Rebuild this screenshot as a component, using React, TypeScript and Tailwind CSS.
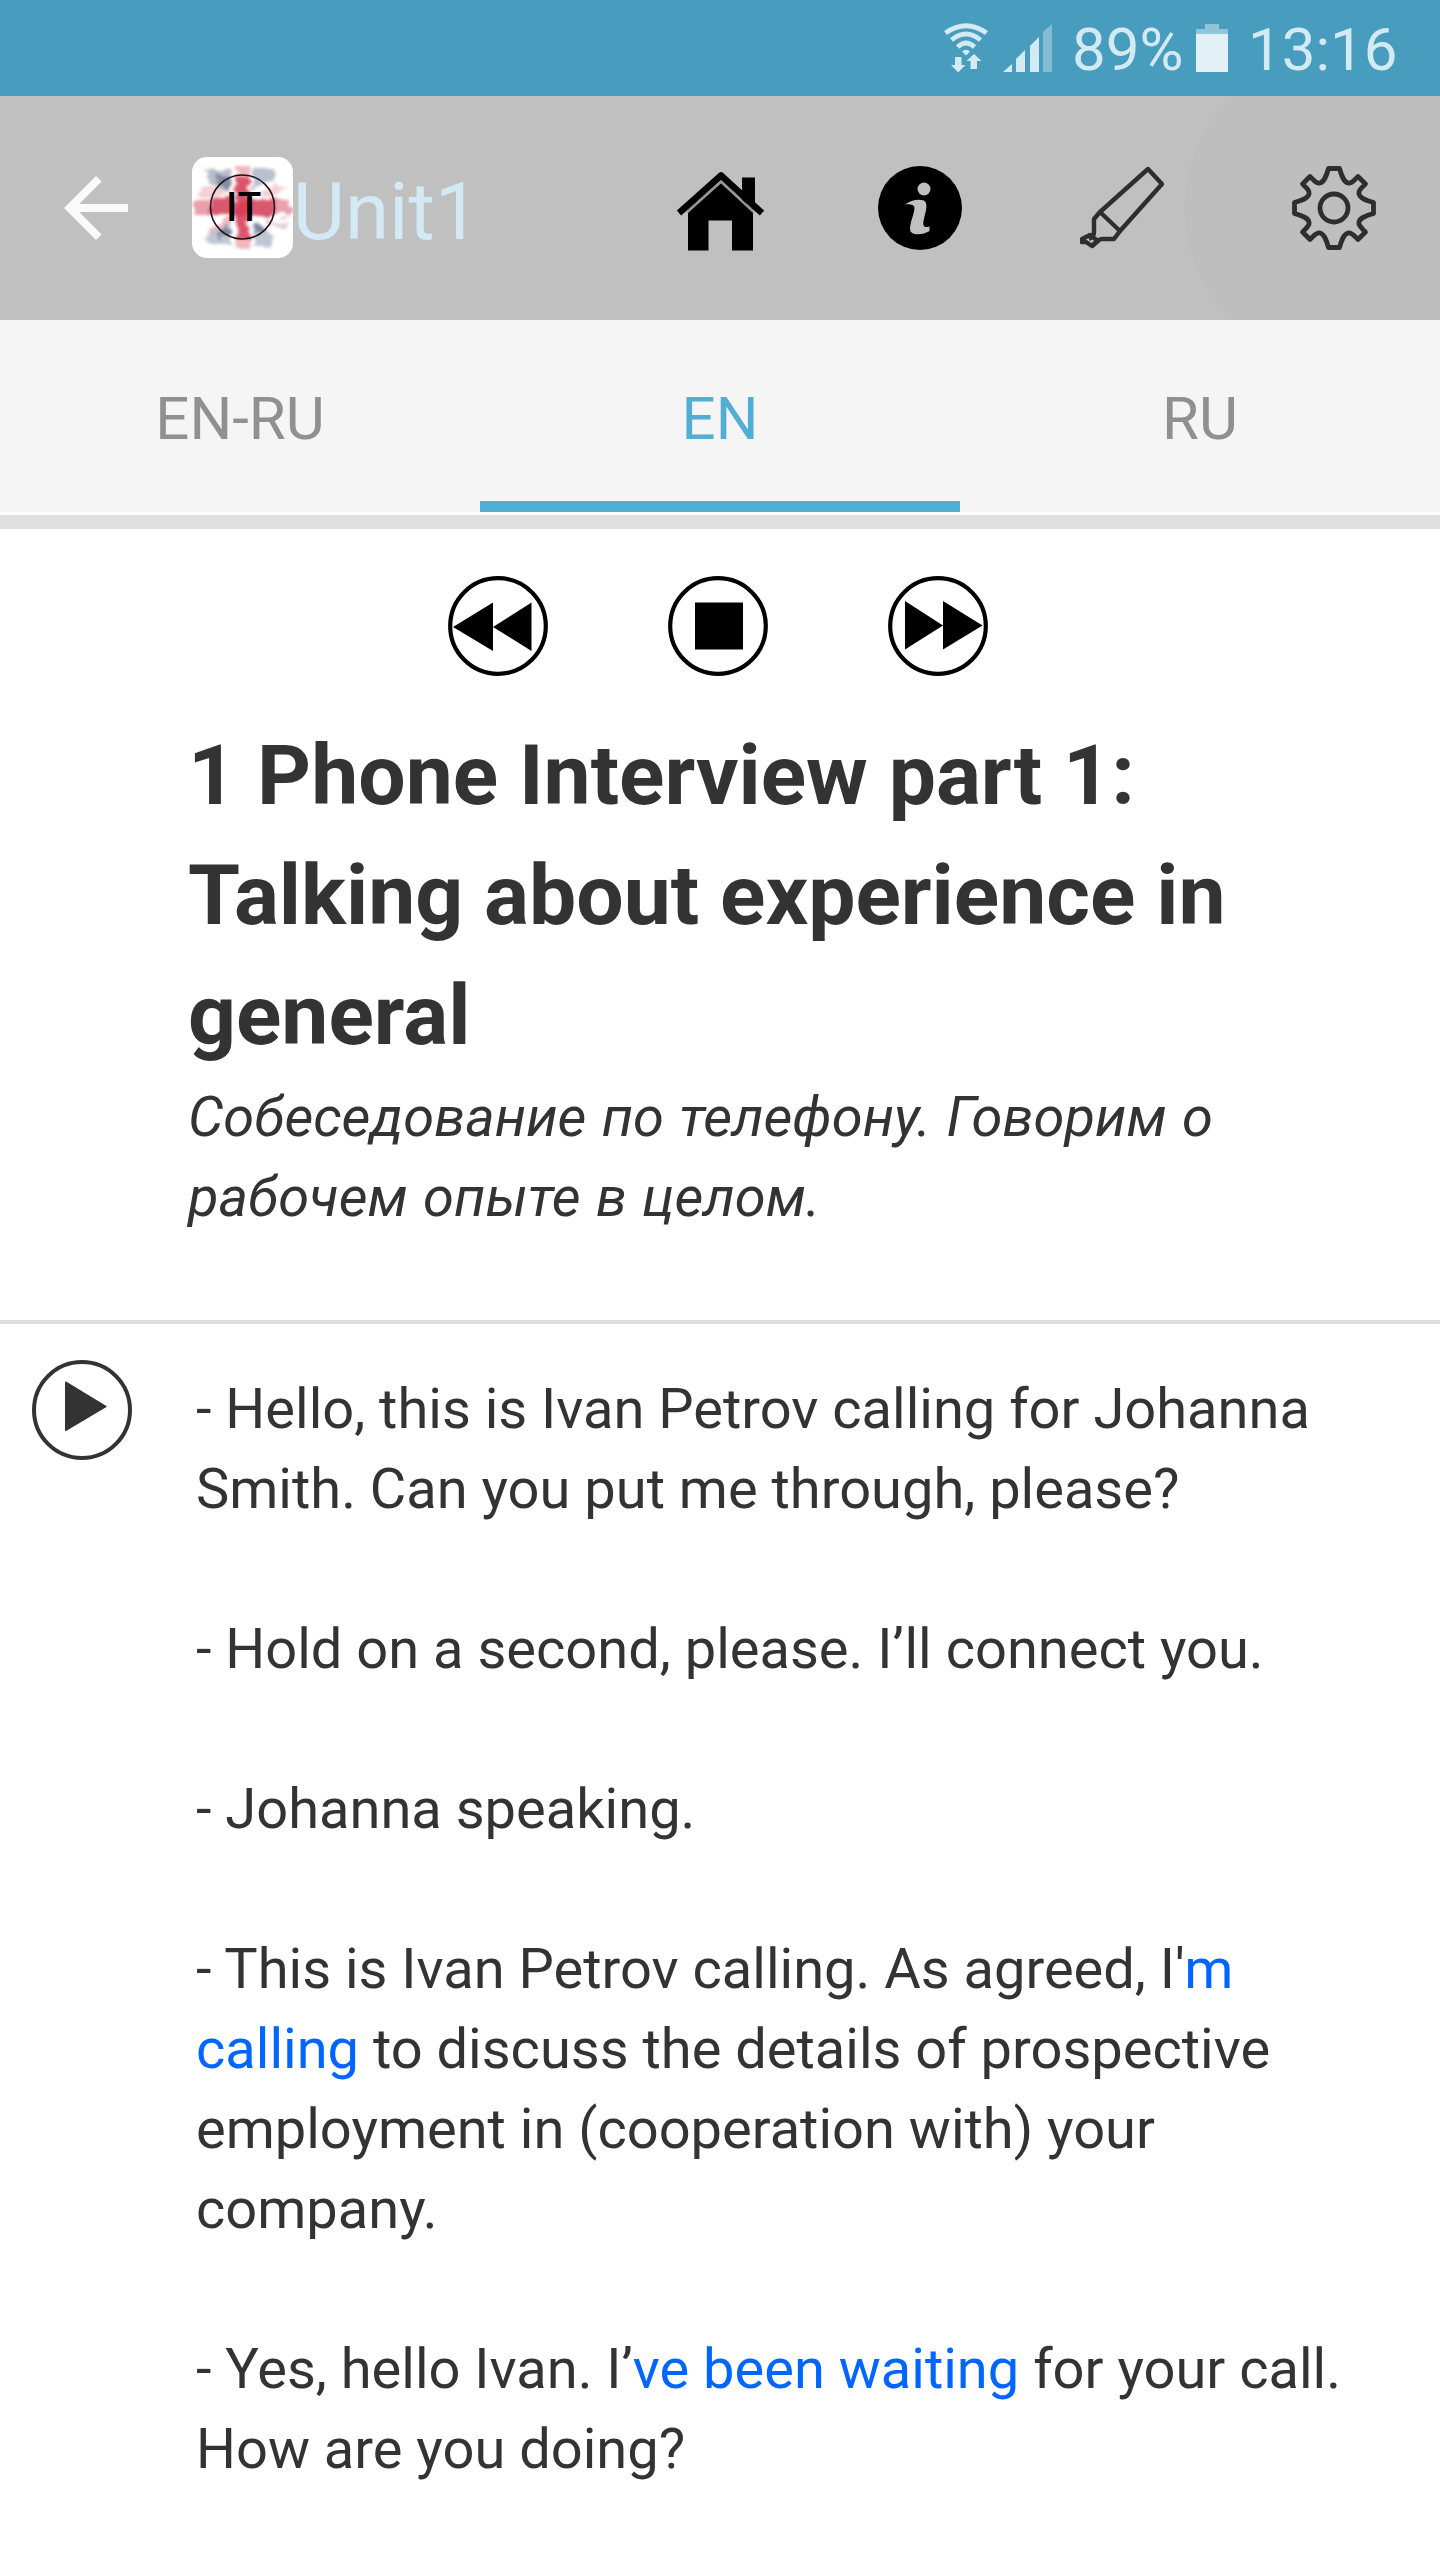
import React from "react";

interface IconProps {
  className?: string;
}

interface Part {
  text: string;
  link?: boolean;
}

const tabs = [
  { name: "EN-RU", active: false },
  { name: "EN", active: true },
  { name: "RU", active: false },
];

const dialog: Part[][][] = [
  [
    [{ text: "- Hello, this is Ivan Petrov calling for Johanna" }],
    [{ text: "Smith. Can you put me through, please?" }],
  ],
  [[{ text: "- Hold on a second, please. I’ll connect you." }]],
  [[{ text: "- Johanna speaking." }]],
  [
    [
      { text: "- This is Ivan Petrov calling. As agreed, I'" },
      { text: "m", link: true },
    ],
    [
      { text: "calling", link: true },
      { text: " to discuss the details of prospective" },
    ],
    [{ text: "employment in (cooperation with) your" }],
    [{ text: "company." }],
  ],
  [
    [
      { text: "- Yes, hello Ivan. I’" },
      { text: "ve been waiting", link: true },
      { text: " for your call." },
    ],
    [{ text: "How are you doing?" }],
  ],
];

function WifiIcon({ className }: IconProps) {
  return (
    <svg className={className} viewBox="0 0 44 50" fill="none">
      <g stroke="#d3eaf3" strokeWidth="4.800">
        <path d="M1.500 10Q22 -4.500 42.500 10" />
        <path d="M7.500 17Q22 5 36.500 17" />
        <path d="M13.500 24Q22 16 30.500 24" />
      </g>
      <path d="M18 28.500Q22 25.200 26 28.500L22 32.500Z" fill="#d3eaf3" />
      <path
        d="M11 34h6.500v8h4l-7.300 7.500-7.200-7.500h4zM26.500 46h6.500v-8h4.500L30 31l-7.500 7h4z"
        fill="#d3eaf3"
      />
    </svg>
  );
}

function SignalIcon({ className }: IconProps) {
  return (
    <svg className={className} viewBox="0 0 50 48" fill="#d3eaf3">
      <path d="M0 48L9 40V48Z" />
      <path d="M13 48V35L22 26V48Z" />
      <path d="M27 48V22L36 13V48Z" />
      <path d="M40 48V8L49 0V48Z" fill="#84bdd3" />
    </svg>
  );
}

function BatteryIcon({ className }: IconProps) {
  return (
    <svg className={className} viewBox="0 0 32 48">
      <path d="M0 5H9V0H23V5H32V10H0Z" fill="#91c4d8" />
      <path d="M0 10H32V48H0Z" fill="#e2eff5" />
    </svg>
  );
}

function BackIcon({ className }: IconProps) {
  return (
    <svg className={className} viewBox="0 0 64 64" fill="#fafafa">
      <path d="M64 28H15.300L37.700 5.600L32 0L0 32L32 64L37.700 58.400L15.300 36H64Z" />
    </svg>
  );
}

function Logo({ className }: IconProps) {
  return (
    <svg className={className} viewBox="0 0 101 101">
      <defs>
        <filter id="paint" x="-20%" y="-20%" width="140%" height="140%">
          <feTurbulence
            type="fractalNoise"
            baseFrequency="0.05 0.14"
            numOctaves="3"
            seed="4"
            result="noise"
          />
          <feDisplacementMap
            in="SourceGraphic"
            in2="noise"
            scale="12"
            xChannelSelector="R"
            yChannelSelector="G"
          />
          <feGaussianBlur stdDeviation="1.7" />
        </filter>
        <clipPath id="logoClip">
          <rect width="101" height="101" rx="15" />
        </clipPath>
      </defs>
      <rect width="101" height="101" rx="15" fill="#fff" />
      <g clipPath="url(#logoClip)">
        <g filter="url(#paint)">
          <path d="M15 13L39 11V36L27 32L13 21Z" fill="#68718f" opacity=".45" />
          <path d="M22 15L38 17V34L29 27Z" fill="#4b5577" opacity=".5" />
          <path d="M61 12L82 12L84 23L61 33Z" fill="#8b94ad" opacity=".6" />
          <path d="M39 65V88L18 88L14 80Z" fill="#7780a0" opacity=".45" />
          <path d="M38 66V78L26 79Z" fill="#4b5577" opacity=".6" />
          <path d="M61 65L82 80L78 90L61 86Z" fill="#7780a0" opacity=".45" />
          <path d="M62 66L75 76L64 79Z" fill="#4b5577" opacity=".6" />
          <path d="M6 34L25 30L36 39H6Z" fill="#e88a98" opacity=".4" />
          <path d="M66 36L86 26L95 31L78 40Z" fill="#e88a98" opacity=".4" />
          <path d="M16 73L34 62H42L20 78Z" fill="#de7787" opacity=".55" />
          <path d="M70 62L98 67L94 71L78 69Z" fill="#b98fa6" opacity=".4" />
          <path d="M2 43H99V59H2Z" fill="#dd6e80" opacity=".65" />
          <path d="M19 42H84V59H19Z" fill="#d5405a" opacity=".75" />
          <path d="M44 9H58V91H44Z" fill="#e46e80" opacity=".5" />
          <path d="M45 20H57V82H45Z" fill="#d5364f" opacity=".75" />
        </g>
      </g>
      <circle
        cx="50.500"
        cy="50"
        r="32"
        fill="none"
        stroke="#1a1115"
        strokeWidth="1.500"
      />
      <text
        x="33.500"
        y="63.700"
        fontSize="39"
        fontWeight="600"
        fontFamily="'Open Sans', sans-serif"
        textLength="35.500"
        lengthAdjust="spacingAndGlyphs"
        fill="#000"
      >
        IT
      </text>
    </svg>
  );
}

function HomeIcon({ className }: IconProps) {
  return (
    <svg className={className} viewBox="0 0 88 84" overflow="visible">
      <path d="M66 34V11.500H79V44Z" fill="#000" />
      <path
        d="M3 47L45 9.500L86 47"
        fill="none"
        stroke="#000"
        strokeWidth="6.500"
        strokeLinejoin="round"
      />
      <path d="M12 44L45 15L77 44V84.500H56V54.500H32.500V84.500H12Z" fill="#000" />
      <path
        d="M11 46.500L45 16L78 46.500"
        fill="none"
        stroke="#9a9a9a"
        strokeWidth="2.200"
      />
    </svg>
  );
}

function InfoIcon({ className }: IconProps) {
  return (
    <svg className={className} viewBox="0 0 84 84">
      <circle cx="42" cy="42" r="42" fill="#000" />
      <g fill="#c0c0c0">
        <circle cx="46" cy="23" r="6.500" />
        <path d="M27 38.500C33 34 40 32.500 46 34.500C51 38 47 47 45.500 55C44.500 61 47 62 51.500 60.500V65C46 68.500 36 70 32.500 65.500C30.500 59 36 50 36.500 42C36.500 38.500 32 38 27 38.500Z" />
      </g>
    </svg>
  );
}

function MarkerIcon({ className }: IconProps) {
  return (
    <svg
      className={className}
      viewBox="0 0 84 84"
      fill="none"
      stroke="#2e2e2e"
      strokeWidth="4.400"
      strokeLinejoin="round"
    >
      <path d="M20 46L68 3L82 18L40 65Z" />
      <path d="M20 46L14 53V66C14 70 11 72 9 73M40 65L34 73H22C18 73 15 77 12 80" />
      <path d="M10 69L18 75L12 80L6 76L2 76V73Z" />
    </svg>
  );
}

function GearIcon({ className }: IconProps) {
  return (
    <svg
      className={className}
      viewBox="-42 -42 84 84"
      fill="none"
      stroke="#2e2e2e"
      strokeWidth="4.800"
      strokeLinejoin="round"
    >
      <circle r="14" />
      <path d="M-5.500 -39.500H5.500C8 -31 10 -26 14 -25C18 -24 20 -28 24 -31.500L31.500 -24C28 -20 24 -18 25 -14C26 -10 31 -8 39.500 -5.500V5.500C31 8 26 10 25 14C24 18 28 20 31.500 24L24 31.500C20 28 18 24 14 25C10 26 8 31 5.500 39.500H-5.500C-8 31 -10 26 -14 25C-18 24 -20 28 -24 31.500L-31.500 24C-28 20 -24 18 -25 14C-26 10 -31 8 -39.500 5.500V-5.500C-31 -8 -26 -10 -25 -14C-24 -18 -28 -20 -31.500 -24L-24 -31.500C-20 -28 -18 -24 -14 -25C-10 -26 -8 -31 -5.500 -39.500Z" />
    </svg>
  );
}

function MediaButton({ d }: { d: string }) {
  return (
    <button className="size-[100px]">
      <svg className="size-full" viewBox="0 0 100 100">
        <circle
          cx="50"
          cy="50"
          r="47.800"
          fill="none"
          stroke="#000"
          strokeWidth="4.200"
        />
        <path d={d} fill="#000" />
      </svg>
    </button>
  );
}

function StatusBar() {
  return (
    <div className="flex h-24 items-start justify-end bg-[#489cbe] pr-[43px] text-[60px] leading-[60px] text-[#d3eaf3]">
      <WifiIcon className="mt-[23px] mr-[15px] h-[50px] w-11" />
      <SignalIcon className="mt-6 mr-[19px] h-12 w-[50px]" />
      <span className="mt-5 w-[114px] whitespace-nowrap">89%</span>
      <BatteryIcon className="mt-6 mr-5 ml-[10px] h-12 w-8" />
      <span className="mt-5 w-[149px] whitespace-nowrap">13:16</span>
    </div>
  );
}

function Header() {
  return (
    <header className="relative flex h-56 items-center overflow-hidden bg-[#c0c0c0] pl-16">
      <div className="absolute -top-[43px] left-[1184px] size-[310px] rounded-full bg-[#bebebe]" />
      <BackIcon className="size-16" />
      <Logo className="mb-px ml-16 size-[101px]" />
      <h1 className="mt-2 w-[383px] text-[80px] leading-[80px] text-[#d3e9f3]">
        Unit1
      </h1>
      <HomeIcon className="h-[84px] w-[88px]" />
      <InfoIcon className="ml-[114px] size-[84px]" />
      <MarkerIcon className="ml-[118px] size-[84px]" />
      <GearIcon className="relative ml-[128px] size-[84px]" />
    </header>
  );
}

function Tabs() {
  return (
    <nav className="grid h-48 grid-cols-3 bg-[#f5f5f5] text-[60px] leading-[60px]">
      {tabs.map((tab) => (
        <button
          key={tab.name}
          className={
            tab.active
              ? "border-b-[11px] border-[#52aed2] pt-4 text-[#52aed2]"
              : "border-b-[11px] border-transparent pt-4 text-[#909090]"
          }
        >
          {tab.name}
        </button>
      ))}
    </nav>
  );
}

export default function App() {
  return (
    <div className="h-[2560px] w-[1440px] overflow-hidden bg-white font-['Roboto',sans-serif] text-[#333]">
      <StatusBar />
      <Header />
      <Tabs />
      <div className="mt-[3px] h-[14px] bg-[#e0e0de]" />

      <section className="h-[795px] border-b-4 border-[#dcdedd] pt-[47px]">
        <div className="flex gap-[120px] pl-[448px]">
          <MediaButton d="M5 51L45 26.500V75ZM45 51L83.500 26.500V75Z" />
          <MediaButton d="M27 26.500H75V73.500H27Z" />
          <MediaButton d="M17 25L55 49.500L17 73.500ZM55 25L94.500 49.500L55 73.500Z" />
        </div>
        <h2 className="mt-10 pl-[188px] text-[84px] leading-[120px] font-bold">
          1 Phone Interview part 1:
          <br />
          Talking about experience in
          <br />
          general
        </h2>
        <p className="mt-px pl-[188px] text-[56px] leading-[80px] [word-spacing:1.6px] italic">
          Собеседование по телефону. Говорим о
          <br />
          рабочем опыте в целом.
        </p>
      </section>

      <section className="flex pl-8">
        <button className="mt-9 size-[100px] shrink-0">
          <svg className="size-full" viewBox="0 0 100 100">
            <circle
              cx="50"
              cy="50"
              r="48"
              fill="none"
              stroke="#333"
              strokeWidth="4"
            />
            <path
              d="M34 22.500L73.500 46.500L34 70Z"
              fill="#333"
              stroke="#333"
              strokeWidth="2"
              strokeLinejoin="round"
            />
          </svg>
        </button>
        <div className="mt-[45px] ml-16 flex flex-col gap-20 text-[56px] leading-[80px] whitespace-nowrap">
          {dialog.map((lines, i) => (
            <div key={i}>
              {lines.map((line, j) => (
                <p key={j}>
                  {line.map((part, k) => (
                    <span key={k} className={part.link ? "text-[#0066ff]" : ""}>
                      {part.text}
                    </span>
                  ))}
                </p>
              ))}
            </div>
          ))}
        </div>
      </section>
    </div>
  );
}
